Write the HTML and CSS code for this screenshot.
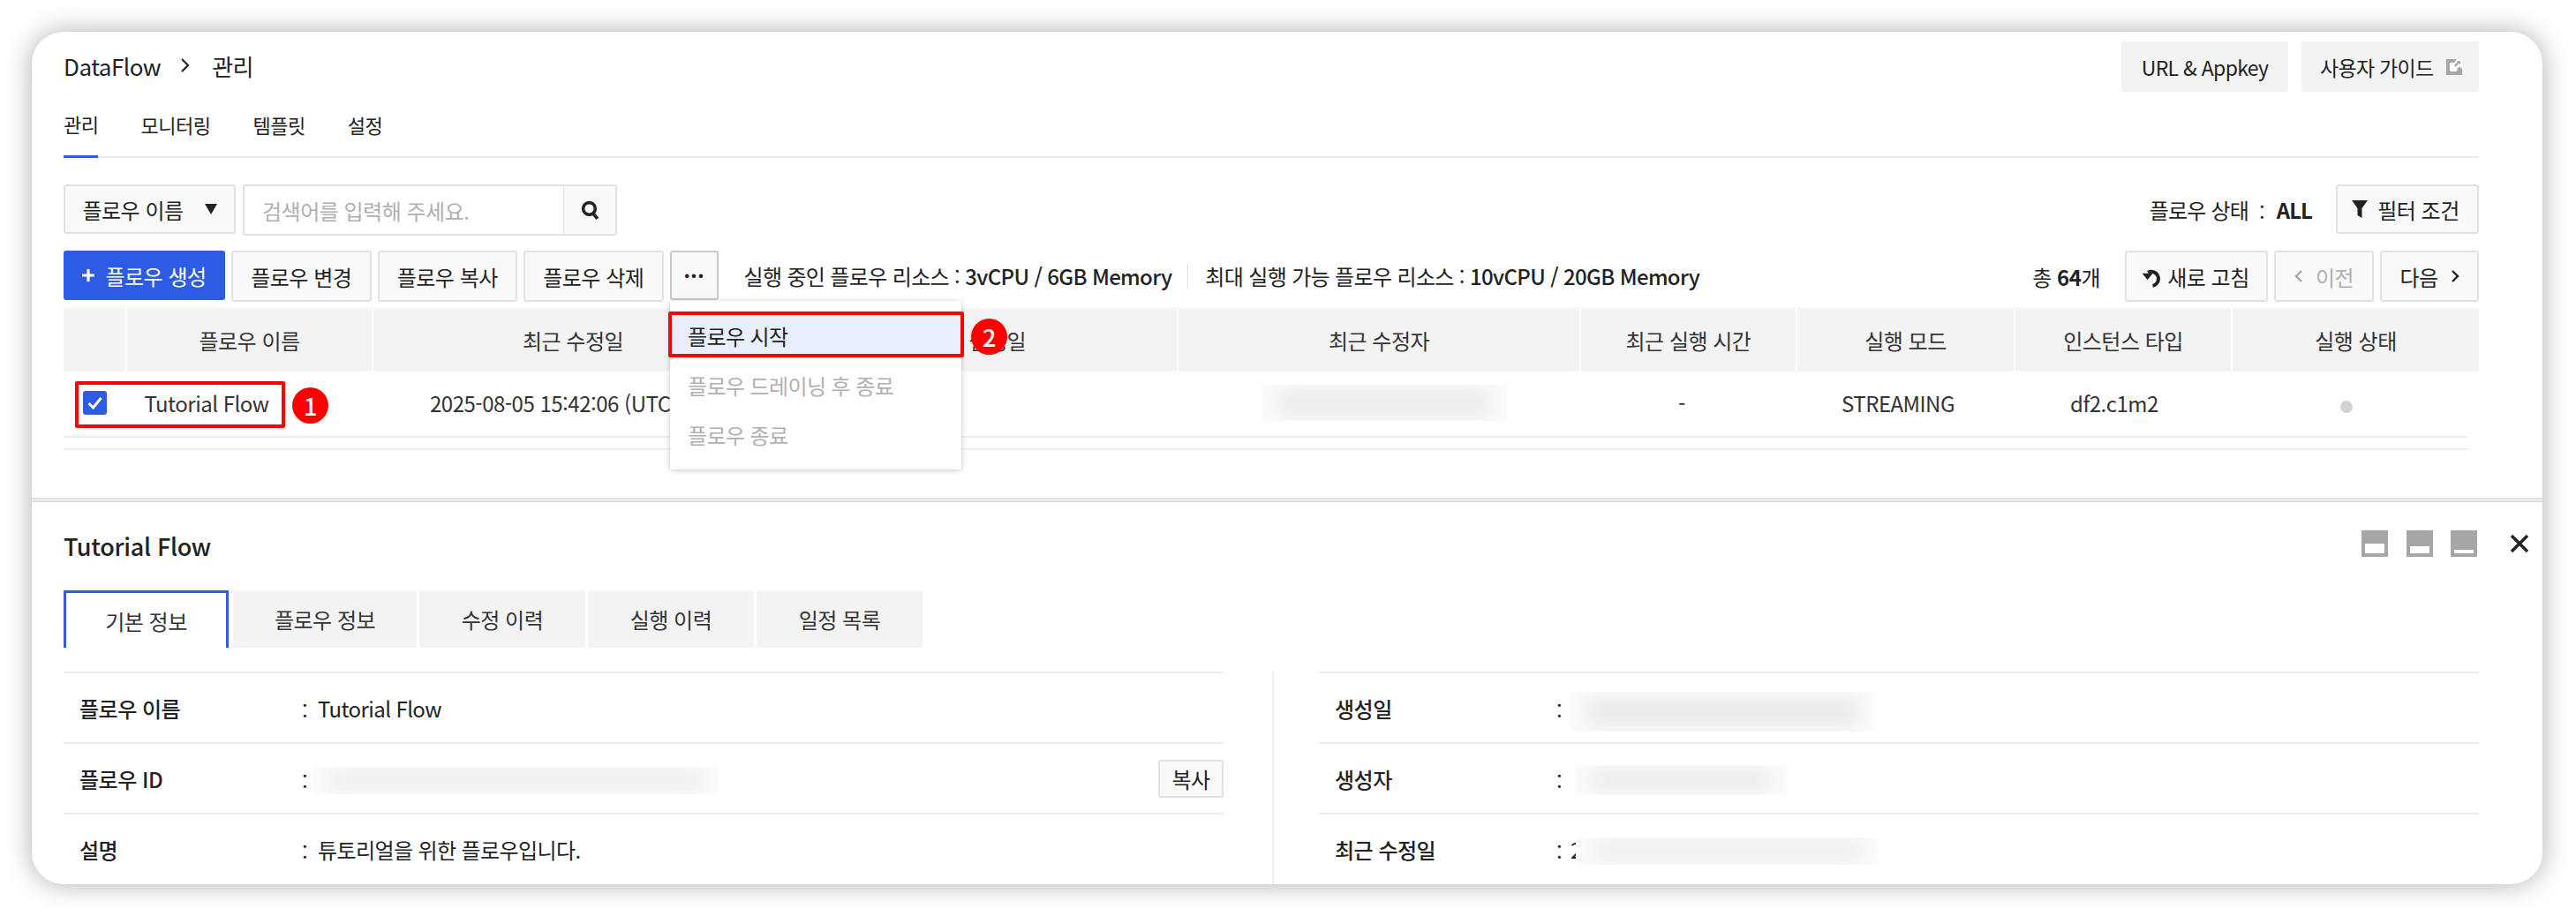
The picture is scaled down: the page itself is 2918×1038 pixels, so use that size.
FILE: index.html
```html
<!DOCTYPE html>
<html lang="ko">
<head>
<meta charset="utf-8">
<title>DataFlow 관리</title>
<link rel="stylesheet" href="styles.css">
</head>
<body>
<main class="card">
  <section class="top">
    <header class="head">
      <div class="crumb"><span>DataFlow</span>
        <svg class="crumb-sep" viewBox="0 0 12 18"><path d="M2 2l7 7-7 7" fill="none" stroke="#222" stroke-width="2.200"/></svg>
        <span class="crumb-cur">관리</span></div>
      <div class="head-btns">
        <button class="btn-flat btn-url">URL &amp; Appkey</button>
        <button class="btn-flat btn-guide">사용자 가이드
          <svg class="ext" viewBox="0 0 18 18"><rect width="18" height="18" fill="#a6a6a6"/><path d="M4 4h5l3-4h6v7h-5l-2-2-3 3 2.500 2.500-3 3H4z" fill="#fff"/><path d="M4.500 4.500H8L5 8z" fill="#fff"/><path d="M9.500 3H18v8l-2.800-2.800-4 4-3.400-3.400 4-4z" fill="#fff"/><path d="M5 5h4.500l2.500 2.500-2 2 3 3-2 1.500H5z" fill="#fff"/><path d="M12 2h4v4l-1.500-1.200-4 4-1.500-1.500 4-4z" fill="#a6a6a6"/></svg>
        </button>
      </div>
    </header>
    <nav class="tabs">
      <a class="tab tab-on">관리</a><a class="tab">모니터링</a><a class="tab">템플릿</a><a class="tab">설정</a>
    </nav>
    <div class="filter-row">
      <button class="btn sel">플로우 이름<svg class="caret" viewBox="0 0 14 12"><path d="M0 0h14L7 12z" fill="#222"/></svg></button>
      <div class="search">
        <span class="ph">검색어를 입력해 주세요.</span>
        <span class="search-btn"><svg viewBox="0 0 20 22" class="mag"><circle cx="9" cy="9" r="6.500" fill="none" stroke="#222" stroke-width="3.400"/><path d="M13 14l5 6" stroke="#222" stroke-width="3.600"/></svg></span>
      </div>
      <div class="state">플로우 상태<span class="colon">:</span><b>ALL</b></div>
      <button class="btn btn-filter"><svg class="funnel" viewBox="0 0 18 20"><path d="M0 0h18l-6.500 9v11l-5-3V9z" fill="#222"/></svg>필터 조건</button>
    </div>
    <div class="action-row">
      <button class="btn-primary"><svg class="plus" viewBox="0 0 14 14"><path d="M5.400 0h3.200v5.400H14v3.200H8.600V14H5.400V8.600H0V5.400h5.400z" fill="#fff"/></svg>플로우 생성</button>
      <button class="btn act">플로우 변경</button>
      <button class="btn act">플로우 복사</button>
      <button class="btn act">플로우 삭제</button>
      <button class="btn more">···</button>
      <p class="res">실행 중인 플로우 리소스 : <b>3vCPU / 6GB Memory</b></p>
      <i class="res-sep"></i>
      <p class="res">최대 실행 가능 플로우 리소스 : <b>10vCPU / 20GB Memory</b></p>
      <p class="total">총 <b>64</b>개</p>
      <button class="btn b-refresh"><svg class="refresh" viewBox="0 0 21 24"><path d="M6 8a7.500 7.500 0 1 1 5 14" fill="none" stroke="#222" stroke-width="3.600"/><path d="M0 9h11l-5.500 7z" fill="#222"/></svg>새로 고침</button>
      <button class="btn b-prev"><svg class="chev" viewBox="0 0 10 16"><path d="M8 2L2 8l6 6" fill="none" stroke="#a8a8a8" stroke-width="2.400"/></svg>이전</button>
      <button class="btn b-next">다음<svg class="chev" viewBox="0 0 10 16"><path d="M2 2l6 6-6 6" fill="none" stroke="#222" stroke-width="2.400"/></svg></button>
    </div>
    <div class="thead">
      <span></span><span>플로우 이름</span><span>최근 수정일</span><span>최근 실행일</span><span>최근 수정자</span><span>최근 실행 시간</span><span>실행 모드</span><span>인스턴스 타입</span><span>실행 상태</span>
    </div>
    <div class="trow">
      <span class="chk"><svg viewBox="0 0 27 27" class="chk-box"><rect width="27" height="27" rx="3" fill="#2d5be3"/><path d="M6.500 14l5 5 9-11" fill="none" stroke="#fff" stroke-width="3"/></svg></span>
      <span>Tutorial Flow</span>
      <span class="date">2025-08-05 15:42:06 (UTC</span>
      <span class="cell-blur"><i class="blur blur-mod"><i></i></i></span>
      <span>-</span>
      <span>STREAMING</span>
      <span>df2.c1m2</span>
      <span><i class="dot"></i></span>
    </div>
    <div class="tfoot"></div>
    <div class="mark mark-row"></div>
    <div class="badge badge-1">1</div>
    <div class="menu">
      <div class="menu-item menu-on">플로우 시작</div>
      <div class="menu-item menu-off">플로우 드레이닝 후 종료</div>
      <div class="menu-item menu-off">플로우 종료</div>
    </div>
    <div class="mark mark-menu"></div>
    <div class="badge badge-2">2</div>
  </section>
  <section class="bottom">
    <div class="panel-head">
      <h2>Tutorial Flow</h2>
      <div class="win-icons">
        <svg class="win win-a" viewBox="0 0 30 30"><rect width="30" height="30" fill="#a6a6a6"/><rect x="4" y="15" width="22" height="11" fill="#fff"/></svg>
        <svg class="win win-b" viewBox="0 0 30 30"><rect width="30" height="30" fill="#a6a6a6"/><rect x="4" y="18" width="22" height="8" fill="#fff"/></svg>
        <svg class="win win-c" viewBox="0 0 30 30"><rect width="30" height="30" fill="#a6a6a6"/><rect x="4" y="22" width="22" height="4" fill="#fff"/></svg>
        <svg class="close" viewBox="0 0 22 22"><path d="M2 2l18 18M20 2L2 20" stroke="#222" stroke-width="3.400"/></svg>
      </div>
    </div>
    <div class="dtabs">
      <a class="dtab dtab-on">기본 정보</a><a class="dtab dtab-2">플로우 정보</a><a class="dtab">수정 이력</a><a class="dtab">실행 이력</a><a class="dtab">일정 목록</a>
    </div>
    <div class="detail">
      <div class="dcol">
        <div class="drow"><b>플로우 이름</b><span class="c">:</span><span class="v">Tutorial Flow</span></div>
        <div class="drow"><b>플로우 ID</b><span class="c">:</span><i class="blur blur-id"><i></i></i><button class="btn copy">복사</button></div>
        <div class="drow"><b>설명</b><span class="c">:</span><span class="v">튜토리얼을 위한 플로우입니다.</span></div>
      </div>
      <div class="dcol dcol-r">
        <div class="drow"><b>생성일</b><span class="c">:</span><i class="blur blur-c1"><i></i></i></div>
        <div class="drow"><b>생성자</b><span class="c">:</span><i class="blur blur-c2"><i></i></i></div>
        <div class="drow"><b>최근 수정일</b><span class="c">:</span><span class="v v-cut">2</span><i class="blur blur-c3"><i></i></i></div>
      </div>
    </div>
  </section>
</main>
</body>
</html>
```

FILE: styles.css
```css
* { box-sizing: border-box; }
html, body { margin: 0; height: 100%; background: #fff; overflow: hidden; }
body {
  padding: 36px 38px 36px 36px;
  font-family: "Noto Sans CJK KR", "Noto Sans", sans-serif;
  font-size: 24px;
  letter-spacing: -0.5px;
  color: #222;
}
button { font: inherit; letter-spacing: inherit; color: inherit; cursor: pointer; }
p, h2 { margin: 0; }
i { font-style: normal; }

.card {
  width: 2844px;
  height: 966px;
  background: #fff;
  border-radius: 36px;
  overflow: hidden;
  box-shadow: 0 0 30px rgba(0, 0, 0, .32);
  display: flex;
  flex-direction: column;
}

/* upper part */
.top {
  position: relative;
  height: 530px;
  flex: none;
  padding: 11px 72px 0 36px;
  border-bottom: 2px solid #ddd;
}
.head { display: flex; justify-content: space-between; align-items: center; height: 57px; }
.crumb { display: flex; align-items: center; font-size: 26px; letter-spacing: -.5px; color: #222; margin-top: -3px; }
.crumb-sep { width: 12px; height: 18px; margin: 0 24px 0 22px; }
.head-btns { display: flex; gap: 15px; font-size: 23px; letter-spacing: -.7px; margin-top: 0; }
.btn-flat {
  height: 57px; border: 0; border-radius: 3px; background: #f3f3f3;
  display: flex; align-items: center; justify-content: center;
}
.btn-url { width: 189px; }
.btn-guide { width: 201px; padding: 0 19px 0 21px; justify-content: space-between; }
.ext { width: 18px; height: 18px; }

.tabs { display: flex; height: 75px; border-bottom: 2px solid #eee; font-size: 22px; }
.tab { height: 75px; margin-right: 48px; display: flex; align-items: center; padding-bottom: 2px; }
.tab-on { border-bottom: 3px solid #2d5be3; padding-bottom: 0; }

.filter-row { display: flex; align-items: flex-start; margin-top: 30px; height: 58px; }
.btn {
  background: #f9f9f9; border: 2px solid #e2e2e2; border-radius: 3px;
  display: flex; align-items: center; justify-content: center; padding: 0;
}
.sel { width: 195px; height: 56px; gap: 24px; }
.caret { width: 14px; height: 12px; }
.search {
  width: 424px; height: 58px; margin-left: 8px;
  border: 2px solid #e2e2e2; border-radius: 3px;
  display: flex; align-items: stretch; justify-content: space-between;
}
.ph { color: #b0b0b0; padding-left: 20px; align-self: center; }
.search-btn { width: 59px; background: #f9f9f9; border-left: 1px solid #e2e2e2; display: flex; align-items: center; justify-content: center; }
.mag { width: 21px; height: 23px; }
.state { margin-left: auto; height: 56px; display: flex; align-items: center; letter-spacing: -.8px; }
.colon { margin: 4px 14px 0 12px; }
.state b { font-weight: 700; letter-spacing: -1px; }
.btn-filter { width: 162px; height: 56px; margin-left: 27px; gap: 11px; padding-right: 4px; }
.funnel { width: 18px; height: 20px; }

.action-row { display: flex; align-items: flex-start; margin-top: 17px; height: 58px; }
.btn-primary {
  width: 183px; height: 56px; border: 0; border-radius: 3px; background: #2d5be3; color: #fff;
  display: flex; align-items: center; justify-content: center; gap: 12px; padding: 0;
}
.plus { width: 14px; height: 14px; }
.act { width: 158.500px; height: 58px; margin-left: 7px; }
.more { width: 55px; height: 56px; margin-left: 7px; border-color: #c9c9c9; font-weight: 700; letter-spacing: 0; padding-bottom: 2px; }
.res { height: 58px; display: flex; align-items: center; white-space: pre; margin-left: 29px; margin-top: -1px; letter-spacing: -.65px; }
.res b { font-weight: 500; }
.res-sep { width: 1px; height: 28px; margin: 15px 0 0 18px; background: #ddd; }
.res-sep + .res { margin-left: 19px; }
.total { margin-left: auto; height: 58px; display: flex; align-items: center; white-space: pre; }
.total b { font-weight: 700; }
.b-refresh { width: 162px; height: 58px; margin-left: 28px; gap: 5px; padding-right: 2px; }
.refresh { width: 24px; height: 26px; }
.b-prev { width: 113px; height: 58px; margin-left: 7px; gap: 14px; color: #b0b0b0; }
.b-next { width: 112px; height: 58px; margin-left: 7px; gap: 14px; }
.chev { width: 10px; height: 16px; }

.thead {
  display: grid;
  grid-template-columns: 72px 279px 454px 458px 456px 245px 247px 246px 279px;
  height: 72px; margin-top: 7px; background: #f3f3f3;
}
.thead span {
  display: flex; align-items: center; justify-content: center; color: #333; padding-top: 1px;
  border-right: 2px solid #fff;
}
.thead span:last-child { border-right: 0; }
.trow {
  display: grid;
  grid-template-columns: 73px 178px 977px 490px 230px 260px 230px 285px;
  height: 75px; width: 2723px; border-bottom: 2px solid #eee; color: #333;
}
.trow > span { display: flex; align-items: center; justify-content: center; padding-bottom: 2px; }
.chk { justify-content: flex-start !important; padding: 0 0 2px 22px; }
.chk-box { width: 27px; height: 27px; }
.trow .date { justify-content: flex-start; padding-left: 164px; white-space: nowrap; }
.trow .cell-blur { justify-content: flex-start; padding-left: 130px; }
.dot { display: block; width: 14px; height: 14px; border-radius: 50%; background: #d2d2d2; margin-left: 10px; margin-top: 8px; }
.tfoot { width: 2723px; height: 14px; border-bottom: 2px solid #eee; }

.blur { display: block; position: relative; overflow: hidden; background: #fbfbfb; flex: none; }
.blur i { position: absolute; inset: 6px 18px; background: #ebebeb; filter: blur(10px); }
.blur-mod { width: 277px; height: 41px; }

/* annotation marks */
.mark { position: absolute; border: 4px solid #f00; border-radius: 2px; z-index: 3; }
.mark-row { left: 49px; top: 396px; width: 238px; height: 53px; }
.mark-menu { left: 721px; top: 317px; width: 335px; height: 52px; }
.badge {
  position: absolute; z-index: 4; width: 41px; height: 41px; border-radius: 50%;
  background: #f00; color: #fff; font-size: 27px; font-weight: 500;
  display: flex; align-items: center; justify-content: center;
}
.badge-1 { left: 295px; top: 403px; }
.badge-2 { left: 1064px; top: 325px; }

.menu {
  position: absolute; z-index: 2; left: 723px; top: 305px; width: 330px; height: 191px;
  background: #fff; border-radius: 3px; padding-top: 13px;
  box-shadow: 0 1px 6px rgba(0, 0, 0, .22);
}
.menu-item { height: 52px; padding-left: 20px; display: flex; align-items: center; margin-bottom: 4px; letter-spacing: -.6px; }
.menu-on { background: #e8effb; }
.menu-off { color: #b0b0b0; }

/* lower part */
.bottom { flex: 1; min-height: 0; margin-top: 1px; border-top: 2px solid #ddd; padding: 0 72px 0 36px; overflow: hidden; }
.panel-head { display: flex; justify-content: space-between; align-items: flex-start; height: 100px; padding-top: 30px; }
.panel-head h2 { font-size: 27px; font-weight: 500; line-height: 40px; letter-spacing: -.3px; color: #222; }
.win-icons { display: flex; align-items: center; height: 30px; margin-top: 2px; margin-right: -57px; }
.win { width: 30px; height: 30px; display: block; margin-right: 21px; }
.win-b { margin-right: 20px; }
.win-c { margin-right: 37px; }
.close { width: 22px; height: 22px; }

.dtabs { display: flex; gap: 3px; height: 65px; }
.dtab { width: 188px; height: 65px; background: #f3f3f3; color: #333; display: flex; align-items: center; justify-content: center; }
.dtab-on { width: 187px; background: #fff; border: 3px solid #2d5be3; border-bottom: 0; }
.dtab-2 { width: 208px; margin-left: 2px; }

.detail { display: grid; grid-template-columns: 1314px 1314px; column-gap: 108px; margin-top: 27px; }
.dcol { border-top: 2px solid #eee; }
.dcol-r { position: relative; }
.dcol-r::before { content: ""; position: absolute; left: -53px; top: -2px; height: 300px; width: 2px; background: #eee; }
.drow { height: 80px; display: flex; align-items: center; padding: 1px 0 0 18px; border-bottom: 2px solid #eee; position: relative; }
.drow:last-child { border-bottom-color: transparent; }
.drow b { width: 252px; font-weight: 500; flex: none; }
.dcol-r .drow b { width: 251px; }
.c { width: 18px; flex: none; margin-top: 4px; }
.dcol-r .c { width: 16px; }
.v { white-space: nowrap; letter-spacing: -.6px; }
.v-cut { width: 6px; overflow: hidden; flex: none; }
.blur-id { width: 458px; height: 31px; margin-top: 3px; margin-left: -5px; }
.blur-c1 { width: 345px; height: 45px; margin-top: 8px; }
.blur-c2 { width: 240px; height: 34px; margin-top: 2px; margin-left: 5px; }
.blur-c3 { width: 340px; height: 31px; margin-top: 4px; margin-left: 3px; }
.copy { position: absolute; right: 0; top: 18px; width: 74px; height: 43px; }
```
